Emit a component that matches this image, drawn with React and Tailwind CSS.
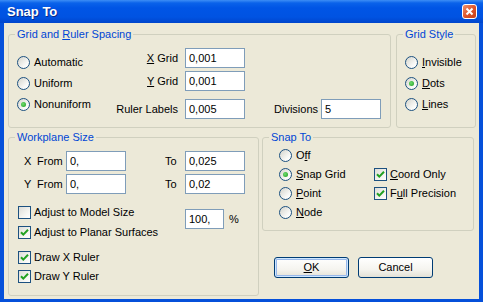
function U({ children }) {
  return <span className="underline underline-offset-[1px]">{children}</span>
}

function Group({ title, className, children }) {
  return (
    <fieldset className={`rounded-[3px] border border-[#d0d0bf] ${className}`}>
      <legend className="ml-[6px] px-[2px] leading-[13px] text-[#0046d5]">{title}</legend>
      {children}
    </fieldset>
  )
}

function Input({ value, className = 'w-[60px]' }) {
  return (
    <div className={`flex h-[20px] shrink-0 items-center border border-[#7f9db9] bg-white pl-[3px] ${className}`}>
      {value}
    </div>
  )
}

function Radio({ checked }) {
  return (
    <span className="flex h-[13px] w-[13px] shrink-0 items-center justify-center rounded-full border border-[#1c5180] bg-[linear-gradient(135deg,#d4d4cc,#fafaf8_70%,#ffffff)]">
      {checked && (
        <span className="h-[5px] w-[5px] rounded-full bg-[radial-gradient(circle_at_40%_40%,#6fdc6f,#1d9a1d)]" />
      )}
    </span>
  )
}

function RadioRow({ label, checked, className = 'h-[21px]' }) {
  return (
    <div className={`flex items-center gap-[4px] ${className}`}>
      <Radio checked={checked} />
      <span>{label}</span>
    </div>
  )
}

function Check({ checked }) {
  return (
    <span className="flex h-[13px] w-[13px] shrink-0 items-center justify-center border border-[#1c5180] bg-[linear-gradient(135deg,#dcdcd7,#f4f4f0_60%,#ffffff)]">
      {checked && (
        <svg width="9" height="9" viewBox="0 0 9 9">
          <path d="M1 4.2 L3.3 6.6 L8 1.8" fill="none" stroke="#21a121" strokeWidth="2" />
        </svg>
      )}
    </span>
  )
}

function CheckRow({ label, checked, className = 'h-[20px]' }) {
  return (
    <div className={`flex items-center gap-[3px] ${className}`}>
      <Check checked={checked} />
      <span>{label}</span>
    </div>
  )
}

function LabeledField({ label, value, className = '' }) {
  return (
    <div className={`flex items-center ${className}`}>
      <span className="w-[68px] text-right">{label}</span>
      <Input value={value} className="ml-[7px] w-[60px]" />
    </div>
  )
}

function XPButton({ children, primary }) {
  return (
    <button
      className={`flex h-[21px] w-[75px] items-center justify-center rounded-[3px] border border-[#003c74] bg-[linear-gradient(to_bottom,#ffffff,#f5f4ef_60%,#e3e1d6)] ${
        primary ? 'shadow-[inset_0_0_0_1px_#cee7ff,inset_0_0_0_2px_#98b8ea]' : ''
      }`}
    >
      {children}
    </button>
  )
}

export default function App() {
  return (
    <div className="flex h-[302px] w-[483px] flex-col font-['Liberation_Sans',Arial,sans-serif] text-[11px] leading-[13px] text-black">
      {/* Title bar */}
      <div className="flex h-[23px] shrink-0 items-center justify-between bg-[linear-gradient(to_bottom,#3d8ef5_0px,#0a62ea_3px,#0055e5_8px,#0053e2_17px,#0045cc_23px)] pl-[7px] pr-[6px]">
        <span className="text-[13px] font-bold text-white [text-shadow:1px_1px_0_#0a2a8a]">Snap To</span>
        <div className="flex h-[15px] w-[15px] items-center justify-center rounded-[3px] border border-white bg-[linear-gradient(135deg,#f0926b,#dd5228_55%,#c4401a)]">
          <svg width="9" height="9" viewBox="0 0 9 9">
            <path d="M1.5 1.5 L7.5 7.5 M7.5 1.5 L1.5 7.5" stroke="#ffffff" strokeWidth="2" />
          </svg>
        </div>
      </div>

      {/* Body */}
      <div className="flex flex-1 flex-col border-x-4 border-b-[3px] border-[#0550da] bg-[#ece9d8] pl-[4px] pt-[5px]">
        <div className="flex">
          <Group title={<>Grid and <U>R</U>uler Spacing</>} className="h-[100px] w-[383px]">
            <div className="flex">
              <div className="flex w-[101px] flex-col pl-[8px] pt-[11px]">
                <RadioRow label="Automatic" />
                <RadioRow label="Uniform" />
                <RadioRow label="Nonuniform" checked />
              </div>
              <div className="flex flex-col pt-[7px]">
                <LabeledField label={<><U>X</U> Grid</>} value="0,001" />
                <LabeledField label={<><U>Y</U> Grid</>} value="0,001" className="mt-[3px]" />
                <LabeledField label="Ruler Labels" value="0,005" className="mt-[8px]" />
              </div>
              <div className="ml-[29px] mt-[58px] flex h-[20px] items-center">
                <span className="w-[47px]">Divisions</span>
                <Input value="5" className="w-[60px] bg-[#fffff8]" />
              </div>
            </div>
          </Group>

          <Group title="Grid Style" className="ml-[5px] h-[100px] w-[80px]">
            <div className="flex flex-col pl-[8px] pt-[11px]">
              <RadioRow label={<><U>I</U>nvisible</>} />
              <RadioRow label={<><U>D</U>ots</>} checked />
              <RadioRow label={<><U>L</U>ines</>} />
            </div>
          </Group>
        </div>

        <div className="mt-[3px] flex">
          <Group title="Workplane Size" className="h-[165px] w-[251px]">
            <div className="flex flex-col pt-[7px]">
              <div className="flex h-[20px] items-center">
                <span className="ml-[15px] w-[13px]">X</span>
                <span className="w-[29px]">From</span>
                <Input value="0," />
                <span className="ml-[39px] w-[20px]">To</span>
                <Input value="0,025" />
              </div>
              <div className="mt-[3px] flex h-[20px] items-center">
                <span className="ml-[15px] w-[13px]">Y</span>
                <span className="w-[29px]">From</span>
                <Input value="0," />
                <span className="ml-[39px] w-[20px]">To</span>
                <Input value="0,02" />
              </div>
              <div className="mt-[8px] flex">
                <div className="flex w-[176px] flex-col pl-[9px]">
                  <CheckRow label="Adjust to Model Size" />
                  <CheckRow label="Adjust to Planar Surfaces" checked />
                </div>
                <div className="mt-[7px] flex h-[20px] items-center">
                  <Input value="100," className="w-[39px]" />
                  <span className="ml-[5px]">%</span>
                </div>
              </div>
              <div className="mt-[6px] flex flex-col pl-[9px]">
                <CheckRow label="Draw X Ruler" checked className="h-[19px]" />
                <CheckRow label="Draw Y Ruler" checked className="h-[19px]" />
              </div>
            </div>
          </Group>

          <div className="ml-[3px] flex flex-col">
            <Group title="Snap To" className="h-[100px] w-[212px]">
              <div className="grid grid-cols-[95px_auto] pl-[16px] pt-[2px]">
                <RadioRow label={<>O<U>f</U>f</>} className="h-[19px]" />
                <div />
                <RadioRow label={<><U>S</U>nap Grid</>} checked className="h-[19px]" />
                <CheckRow label={<><U>C</U>oord Only</>} checked className="h-[19px]" />
                <RadioRow label={<><U>P</U>oint</>} className="h-[19px]" />
                <CheckRow label={<>F<U>u</U>ll Precision</>} checked className="h-[19px]" />
                <RadioRow label={<><U>N</U>ode</>} className="h-[19px]" />
                <div />
              </div>
            </Group>
            <div className="ml-[12px] mt-[26px] flex gap-[9px]">
              <XPButton primary>
                <U>O</U>K
              </XPButton>
              <XPButton>Cancel</XPButton>
            </div>
          </div>
        </div>
      </div>
    </div>
  )
}
